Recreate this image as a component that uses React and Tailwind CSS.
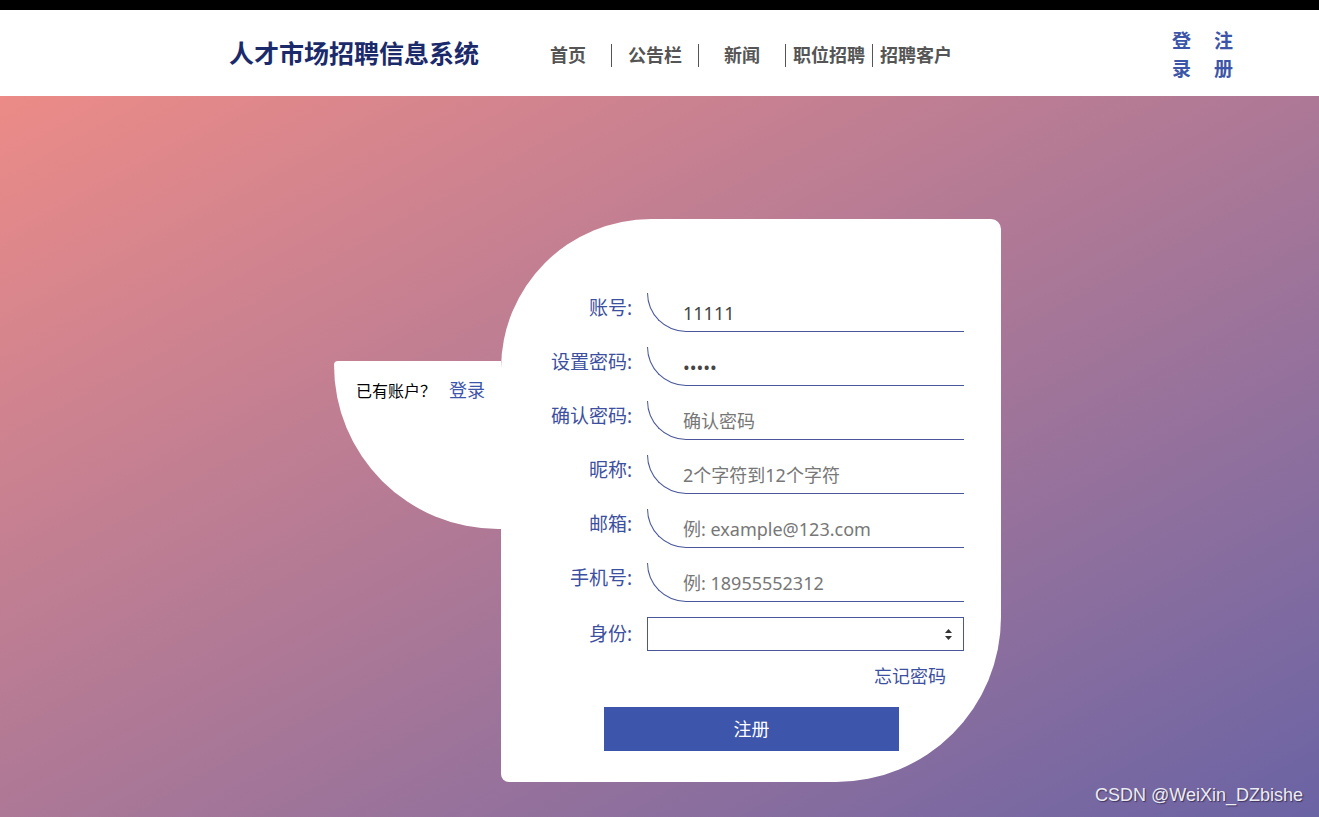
import React, { useState } from "react";

const navItems = ["首页", "公告栏", "新闻", "职位招聘", "招聘客户"];

const fields = [
  { label: "账号:", type: "text", value: "11111", placeholder: "" },
  { label: "设置密码:", type: "password", value: "11111", placeholder: "" },
  { label: "确认密码:", type: "password", value: "", placeholder: "确认密码" },
  { label: "昵称:", type: "text", value: "", placeholder: "2个字符到12个字符" },
  { label: "邮箱:", type: "text", value: "", placeholder: "例: example@123.com" },
  { label: "手机号:", type: "text", value: "", placeholder: "例: 18955552312" },
];

const font = "font-['Noto_Sans','Noto_Sans_CJK_SC',sans-serif]";

const Header = () => (
  <div className="bg-white">
    <div className="h-[10px] bg-black" />
    <div className="h-[86px] flex items-center pl-[229px] pr-[86px]">
      <h1 className="text-[25px] font-bold text-[#1b2a6b] leading-none">
        人才市场招聘信息系统
      </h1>
      <ul className="flex items-center ml-[46px] mt-[4px]">
        {navItems.map((item, i) => (
          <li
            key={item}
            className={
              "w-[86px] h-[23px] flex items-center justify-center text-[18px] font-semibold text-[#555] whitespace-nowrap " +
              (i < navItems.length - 1 ? "border-r border-[#555] box-content" : "")
            }
          >
            {item}
          </li>
        ))}
      </ul>
      <div className="flex-1" />
      <div className="flex gap-[23px] text-[19px] font-bold text-[#3c55a8] leading-[28px] mt-[4px]">
        <a className="flex flex-col cursor-pointer">
          <span>登</span>
          <span>录</span>
        </a>
        <a className="flex flex-col cursor-pointer">
          <span>注</span>
          <span>册</span>
        </a>
      </div>
    </div>
  </div>
);

const Field = ({ field }) => {
  const [value, setValue] = useState(field.value);
  return (
    <div className="flex items-start h-[38px]">
      <label className="w-[131px] text-right text-[19px] text-[#3d4fa0] leading-[24px] pt-[3px]">
        {field.label}
      </label>
      <input
        type={field.type}
        value={value}
        placeholder={field.placeholder}
        onChange={(e) => setValue(e.target.value)}
        className="ml-[15px] w-[317px] h-[39px] border-l border-b border-[#4a5699] rounded-bl-[40px] pl-[35px] pt-[2px] text-[18px] text-[#444] placeholder:text-[#777] outline-none bg-transparent"
      />
    </div>
  );
};

const RegisterCard = () => (
  <div className="w-[500px] h-[563px] bg-white rounded-tl-[150px] rounded-tr-[10px] rounded-br-[165px] rounded-bl-[8px] pt-[74px] relative z-10">
    <div className="flex flex-col gap-[16px]">
      {fields.map((f) => (
        <Field key={f.label} field={f} />
      ))}
      <div className="flex items-center h-[34px]">
        <label className="w-[131px] text-right text-[19px] text-[#3d4fa0] leading-[24px]">
          身份:
        </label>
        <div className="relative ml-[15px] w-[317px] h-[34px]">
          <select className="w-full h-full border border-[#4a5699] bg-white appearance-none outline-none text-[16px] px-2">
            <option value=""></option>
            <option value="user">求职者</option>
            <option value="company">企业</option>
          </select>
          <svg
            className="absolute right-[12px] top-[12px] pointer-events-none"
            width="7"
            height="11"
            viewBox="0 0 7 11"
          >
            <path d="M3.5 0 L7 4 L0 4 Z" fill="#333" />
            <path d="M3.5 11 L7 7 L0 7 Z" fill="#333" />
          </svg>
        </div>
      </div>
    </div>
    <div className="flex justify-end pr-[55px] mt-[13px]">
      <a className="text-[18px] text-[#3d4fa0] leading-[24px] cursor-pointer">忘记密码</a>
    </div>
    <div className="pl-[103px] mt-[19px]">
      <button className="w-[295px] h-[44px] bg-[#3d55ab] text-white text-[18px]">
        注册
      </button>
    </div>
  </div>
);

export default function App() {
  return (
    <div className={"min-h-[817px] flex flex-col " + font}>
      <Header />
      <div className="relative flex-1 bg-gradient-to-br from-[#ec8b87] via-[#ad7896] to-[#6a63a4] pt-[123px] pb-[35px] overflow-hidden">
        <div className="flex justify-center ml-[16px]">
          <div className="w-[167px] h-[168px] mt-[142px] bg-white rounded-tl-[4px] rounded-bl-[168px] pl-[22px] pt-[16px] text-[16px] leading-[24px] whitespace-nowrap font-['Noto_Sans_CJK_SC',sans-serif]">
            <span className="text-black">已有账户？</span>
            <a className="text-[#3d55ab] text-[18px] ml-[13px] cursor-pointer">登录</a>
          </div>
          <RegisterCard />
        </div>
        <div className="absolute right-[16px] bottom-[8px] text-[18px] text-[#ececf4] font-['Liberation_Sans',sans-serif] [text-shadow:1px_1px_1px_rgba(40,30,60,0.7)]">
          CSDN @WeiXin_DZbishe
        </div>
      </div>
    </div>
  );
}
